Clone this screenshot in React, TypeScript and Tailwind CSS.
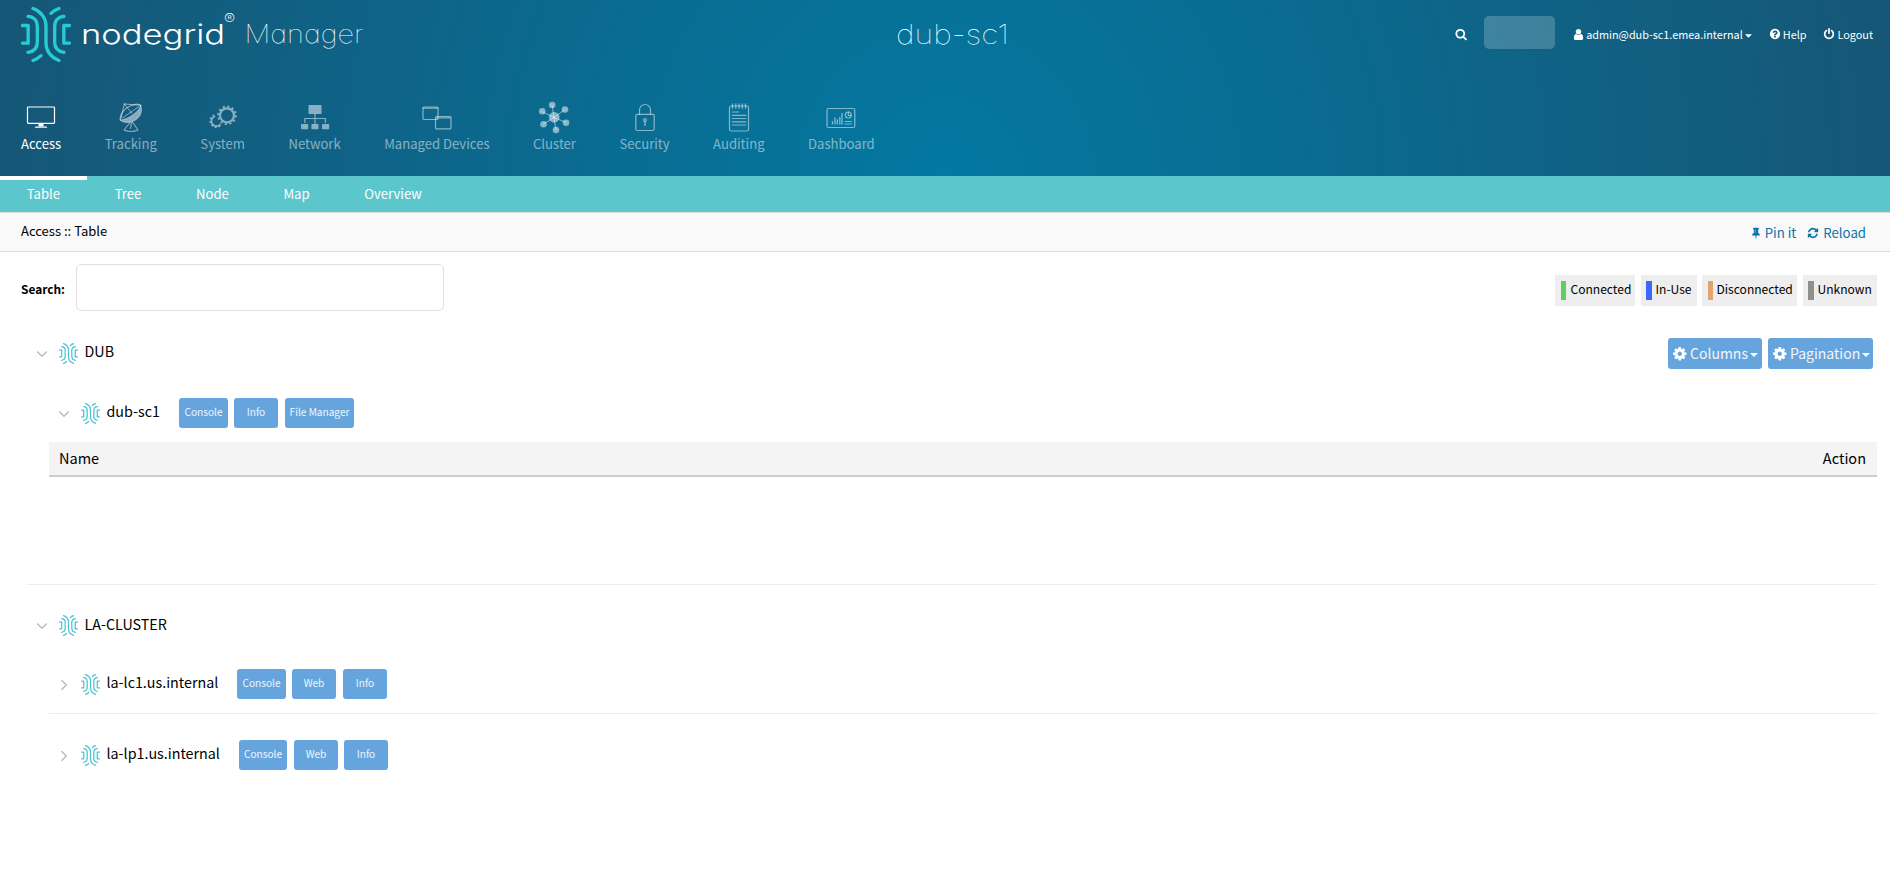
import type { ReactNode } from "react";

const FA = {
  search:
    "M1216 832q0-185-131.500-316.500t-316.500-131.500-316.500 131.500-131.500 316.500 131.500 316.500 316.500 131.500 316.500-131.500 131.500-316.500zm512 832q0 52-38 90t-90 38q-54 0-90-38l-343-342q-179 124-399 124-143 0-273.500-55.500t-225-150-150-225-55.500-273.500 55.500-273.500 150-225 225-150 273.500-55.500 273.500 55.500 225 150 150 225 55.500 273.500q0 220-124 399l343 343q37 37 37 90z",
  user: "M1536 1399q0 109-62.500 187t-150.500 78h-854q-88 0-150.500-78t-62.500-187q0-85 8.500-160.500t31.500-152 58.500-131 94-89 134.500-34.500q131 128 313 128t313-128q76 0 134.500 34.500t94 89 58.500 131 31.500 152 8.500 160.500zm-256-887q0 159-112.500 271.500t-271.500 112.500-271.500-112.500-112.500-271.500 112.500-271.500 271.500-112.500 271.500 112.500 112.500 271.500z",
  help: "M1024 1376v-192q0-14-9-23t-23-9h-192q-14 0-23 9t-9 23v192q0 14 9 23t23 9h192q14 0 23-9t9-23zm256-672q0-88-55.500-163t-138.500-116-170-41q-243 0-371 213-15 24 8 42l132 100q7 6 19 6 16 0 25-12 53-68 86-92 34-24 86-24 48 0 85.500 26t37.500 59q0 38-20 61t-68 45q-63 28-115.500 86.500t-52.500 125.500v36q0 14 9 23t23 9h192q14 0 23-9t9-23q0-19 21.500-49.500t54.500-49.500q32-18 49-28.500t46-35 44.500-48 28-60.500 12.500-81zm384 192q0 209-103 385.500t-279.500 279.500-385.500 103-385.500-103-279.500-279.500-103-385.500 103-385.500 279.500-279.500 385.500-103 385.500 103 279.500 279.500 103 385.500z",
  power:
    "M1664 896q0 156-61 298t-164 245-245 164-298 61-298-61-245-164-164-245-61-298q0-182 80.500-343t226.500-270q43-32 95.500-25t83.500 50q32 42 24.500 94.500t-49.500 84.500q-98 74-151.500 181t-53.500 228q0 104 40.500 198.500t109.500 163.500 163.500 109.500 198.500 40.500 198.500-40.500 163.500-109.500 109.500-163.500 40.500-198.500q0-121-53.500-228t-151.500-181q-42-32-49.500-84.500t24.500-94.500q31-43 84-50t95 25q146 109 226.500 270t80.500 343zm-640-768v640q0 52-38 90t-90 38-90-38-38-90v-640q0-52 38-90t90-38 90 38 38 90z",
  refresh:
    "M1639 1056q0 5-1 7-64 268-268 434.500t-478 166.500q-146 0-282.500-55t-243.500-157l-129 129q-19 19-45 19t-45-19-19-45v-448q0-26 19-45t45-19h448q26 0 45 19t19 45-19 45l-137 137q71 66 161 102t187 36q134 0 250-65t186-179q11-17 53-117 8-23 30-23h192q13 0 22.500 9.500t9.500 22.500zm25-800v448q0 26-19 45t-45 19h-448q-26 0-45-19t-19-45 19-45l138-138q-148-137-349-137-134 0-250 65t-186 179q-11 17-53 117-8 23-30 23h-199q-13 0-22.500-9.500t-9.500-22.500v-7q65-268 270-434.500t480-166.500q146 0 284 55.500t245 156.500l130-129q19-19 45-19t45 19 19 45z",
  pin: "M800 864v-448q0-14-9-23t-23-9-23 9-9 23v448q0 14 9 23t23 9 23-9 9-23zm672 352q0 26-19 45t-45 19h-429l-51 483q-2 12-10.500 20.500t-20.500 8.500h-1q-27 0-32-27l-76-485h-404q-26 0-45-19t-19-45q0-123 78.500-221.500t177.500-98.500v-512q-52 0-90-38t-38-90 38-90 90-38h640q52 0 90 38t38 90-38 90-90 38v512q99 0 177.500 98.500t78.500 221.500z",
  cog: "M1152 896q0-106-75-181t-181-75-181 75-75 181 75 181 181 75 181-75 75-181zm512-109v222q0 12-8 23t-20 13l-185 28q-19 54-39 91 35 50 107 138 10 12 10 25t-9 23q-27 37-99 108t-94 71q-12 0-26-9l-138-108q-44 23-91 38-16 136-29 186-7 28-36 28h-222q-14 0-24.500-8.500t-11.500-21.500l-28-184q-49-16-90-37l-141 107q-10 9-25 9-14 0-25-11-126-114-165-168-7-10-7-23 0-12 8-23 15-21 51-66.500t54-70.500q-27-50-41-99l-183-27q-13-2-21-12.500t-8-23.500v-222q0-12 8-23t19-13l186-28q14-46 39-92-40-57-107-138-10-12-10-24 0-10 9-23 26-36 98.500-107.500t94.500-71.500q13 0 26 10l138 107q44-23 91-38 16-136 29-186 7-28 36-28h222q14 0 24.500 8.500t11.500 21.500l28 184q49 16 90 37l142-107q9-9 24-9 13 0 25 10 129 119 165 170 7 8 7 22 0 12-8 23-15 21-51 66.500t-54 70.500q26 50 41 98l183 28q13 2 21 12.500t8 23.500z",
};

function Glyph({ d, className }: { d: string; className: string }) {
  return (
    <svg viewBox="0 0 1792 1792" fill="currentColor" className={`shrink-0 ${className}`}>
      <path d={d} />
    </svg>
  );
}

function Caret({ className }: { className: string }) {
  return (
    <svg viewBox="0 0 8 4" className={`h-1 shrink-0 ${className}`} fill="currentColor">
      <path d="M0 0h8L4 4z" />
    </svg>
  );
}

function Mark({ className, color }: { className: string; color: string }) {
  return (
    <svg viewBox="33 21 150 165" className={`shrink-0 ${className}`} fill="none" stroke={color} strokeWidth="10" strokeLinecap="round" strokeLinejoin="round">
      <path d="M37.500 76.500H54.500V129.500H37.500" />
      <path d="M54 49C72 50 82 62 82 80V126C82 144 72 155 54 157" />
      <path d="M69 25.500C92 33 108 54 108 78V130C108 152 122 173 147 181.500" />
      <path d="M69 181.500Q83 177 93 167" />
      <path d="M147 25.500Q133 30 123 40" />
      <path d="M162 49C144 50 134 62 134 80V126C134 144 144 155 162 157" />
      <path d="M178.500 76.500H161.500V129.500H178.500" />
    </svg>
  );
}

function Icon({ children }: { children: ReactNode }) {
  return (
    <svg viewBox="0 0 34 34" className="h-[34px] w-[34px]" fill="none" stroke="currentColor" strokeWidth="1.200" strokeLinejoin="round" strokeLinecap="round">
      {children}
    </svg>
  );
}

const monitor = (
  <Icon>
    <rect x="3.500" y="7" width="27" height="16.300" rx="0.800" />
    <path d="M14.500 23.300h5v3.200h-5z" fill="currentColor" stroke="none" />
    <path d="M11.500 27.200h11" />
  </Icon>
);

const dish = (
  <Icon>
    <path d="M6.300 20C5.500 15 10 8.500 16 6C20.500 4 25 3.500 26.800 5.500" />
    <path d="M6.300 20C12 20 24 13.500 26.800 5.500C29 12.500 25.500 18 20.500 20.500C15 23.500 8.500 23 6.300 20z" fill="currentColor" strokeWidth="0.800" />
    <path d="M10.300 4L7 18M10.300 4L26.500 5.300M10.300 4L18 13.500M8.500 18L25 6.500" strokeWidth="1" />
    <path d="M16 22.500L10 30M18.500 22l5.500 8M10 30q7 3 14 0M17.500 22.500l-1 6" strokeWidth="1.100" />
  </Icon>
);

const gears = (
  <Icon>
    <circle cx="21" cy="15.300" r="7" strokeWidth="2.200" />
    <circle cx="21" cy="15.300" r="8.900" strokeWidth="1.800" strokeDasharray="2.200 2.460" strokeLinecap="butt" />
    <path d="M8.500 16.500a5 5 0 1 0 5.600 8" strokeWidth="1.700" />
    <path d="M8.200 15a6.300 6.300 0 1 0 7.400 9.500" strokeWidth="1.600" strokeDasharray="1.900 2" strokeLinecap="butt" />
  </Icon>
);

const network = (
  <Icon>
    <g fill="currentColor" stroke="none">
      <rect x="10.500" y="5" width="13" height="9" rx="0.600" />
      <rect x="3" y="24" width="7.200" height="5.300" rx="0.800" />
      <rect x="13.400" y="24" width="7.200" height="5.300" rx="0.800" />
      <rect x="24" y="24" width="7.200" height="5.300" rx="0.800" />
    </g>
    <path d="M17 14v9.500M6.800 22.500v-4h20.600v4" />
  </Icon>
);

const devices = (
  <Icon>
    <rect x="3" y="7" width="15" height="12.500" rx="1" />
    <path d="M3 8.200h15" />
    <path d="M18 16.500h12a1 1 0 0 1 1 1v10.300a1 1 0 0 1-1 1H16.500a1 1 0 0 1-1-1v-10.300a1 1 0 0 1 1-1H18M15.500 17.800H31" />
  </Icon>
);

const cluster = (
  <Icon>
    <path d="M17 17.500L15 5M17 17.500l11-8M17 17.500l12 5M17 17.500L19 30M17 17.500L6.500 24M17 17.500L5 11.500" strokeWidth="1" />
    <g fill="currentColor" stroke="none">
      <circle cx="17.200" cy="17.300" r="5.400" />
      <circle cx="15.200" cy="5" r="3.300" />
      <circle cx="28" cy="9.500" r="3.300" />
      <circle cx="29" cy="22.800" r="3.300" />
      <circle cx="19" cy="30" r="3.300" />
      <circle cx="6.500" cy="24.200" r="3.300" />
      <circle cx="5.200" cy="11.300" r="3.300" />
    </g>
  </Icon>
);

const lock = (
  <Icon>
    <rect x="7.800" y="14.300" width="18.400" height="16.200" rx="1.500" />
    <path d="M11.500 14v-4a5.500 5.500 0 0 1 11 0v4" />
    <circle cx="17" cy="20" r="1.400" />
    <path d="M17 21.500v4" strokeWidth="1.400" />
  </Icon>
);

const notepad = (
  <Icon>
    <rect x="7.500" y="6" width="19" height="25" rx="1.800" />
    <path d="M10.500 3.800v4.500M13.800 3.800v4.500M17 3.800v4.500M20.300 3.800v4.500M23.500 3.800v4.500" />
    <path d="M10.300 12h6.500M10.300 15.300h13.500M10.300 18.500h13.500M10.300 21.800h13.500M10.300 25h13.500" />
  </Icon>
);

const dashboard = (
  <Icon>
    <rect x="3" y="8.500" width="27.800" height="19" rx="1.500" />
    <path d="M8.500 24.500v-3.500M11 24.500v-7M13.300 24.500v-5M15.800 24.500v-7.500M18 24.500V13" strokeWidth="1.300" strokeLinecap="butt" />
    <circle cx="24.300" cy="15" r="3" />
    <path d="M24.300 12v3.500h2.500M21 21.500h6.500M21 24h6.500" />
  </Icon>
);

const mainNav: { label: string; icon: ReactNode; active?: boolean }[] = [
  { label: "Access", icon: monitor, active: true },
  { label: "Tracking", icon: dish },
  { label: "System", icon: gears },
  { label: "Network", icon: network },
  { label: "Managed Devices", icon: devices },
  { label: "Cluster", icon: cluster },
  { label: "Security", icon: lock },
  { label: "Auditing", icon: notepad },
  { label: "Dashboard", icon: dashboard },
];

const subNav = ["Table", "Tree", "Node", "Map", "Overview"];

const legend = [
  { label: "Connected", swatch: "bg-[#5fcf5f] w-[5px] mr-[4.500px]", box: "w-20 pl-1.5" },
  { label: "In-Use", swatch: "bg-[#3d66ff] w-1.5 mr-[3.500px]", box: "ml-1.5 w-14 pl-[5px]" },
  { label: "Disconnected", swatch: "bg-[#e2a46f] w-[5px] mr-[3.500px]", box: "ml-[5px] w-[95px] pl-1.5" },
  { label: "Unknown", swatch: "bg-[#8f8f8f] w-1.5 mr-[3.500px]", box: "ml-1.5 w-[74px] pl-[5px]" },
];

function Chevron({ open }: { open?: boolean }) {
  return (
    <svg viewBox="0 0 12 12" className="size-3 shrink-0" fill="none" stroke="#bcbcbc" strokeWidth="1.500">
      <path d={open ? "M1.200 3.500L6 8.300l4.800-4.800" : "M3.500 1.200L8.300 6l-4.800 4.800"} />
    </svg>
  );
}

type Action = { label: string; className: string };

function NodeRow({ name, open, level, actions = [], nameClass }: { name: string; open?: boolean; level: 0 | 1; actions?: Action[]; nameClass: string }) {
  return (
    <div className={`flex h-[30px] items-center ${level === 0 ? "pl-9" : "pl-[58px]"}`}>
      <span className="mt-px flex">
        <Chevron open={open} />
      </span>
      <Mark className="ml-[11px] h-[21px] w-[19px]" color="#4cc5d3" />
      <span className={`ml-[6.500px] text-[14.3px] leading-5 whitespace-nowrap ${nameClass}`}>{name}</span>
      {actions.map((a) => (
        <button key={a.label} className={`flex h-[30px] shrink-0 items-center justify-center rounded-[3px] bg-[#66a4de] pb-0.5 text-[10.1px] leading-5 text-white/90 ${a.className}`}>
          {a.label}
        </button>
      ))}
    </div>
  );
}

function Menu({ label, className }: { label: string; className: string }) {
  return (
    <button className={`flex h-[31px] items-center rounded-[3px] bg-[#66a4de] pl-[3.500px] text-white ${className}`}>
      <Glyph d={FA.cog} className="size-[15.500px]" />
      <span className="mb-0.5 ml-[3px] text-[14px] leading-5 whitespace-nowrap text-white/90">{label}</span>
      <Caret className="mt-[3px] ml-[2px] w-2" />
    </button>
  );
}

export default function App() {
  return (
    <div className="flex min-h-[870px] w-full flex-col bg-white font-['Noto_Sans_CJK_SC',sans-serif] text-black">
      <header className="flex h-44 flex-col bg-[radial-gradient(circle_at_50%_100%,#0378a1,#165676)] text-white">
        <div className="grid h-[90px] grid-cols-3 items-start">
          <div className="flex pt-[7px] pl-[21px]">
            <Mark className="h-[55px] w-[50px]" color="#27cbd6" />
            <svg viewBox="0 0 290 50" className="ml-[9px] h-[50px] w-[290px] font-[Inter]" fill="white">
              <text x="1" y="36.700" fontSize="27.500" fontWeight="300" textLength="144" lengthAdjust="spacingAndGlyphs">nodegrid</text>
              <text x="144" y="17.600" fontSize="16.500" fontWeight="200">®</text>
              <text x="164.500" y="36" fontSize="25.600" fontWeight="100" textLength="119" lengthAdjust="spacingAndGlyphs" className="[font-feature-settings:'cv11']">Manager</text>
            </svg>
          </div>
          <svg viewBox="0 0 120 50" className="mt-[7px] ml-[260px] h-[50px] w-[120px] font-[Inter]" fill="white">
            <text x="6" y="36.700" fontSize="27.500" fontWeight="100" textLength="113" lengthAdjust="spacingAndGlyphs">dub-sc1</text>
          </svg>
          <div className="flex items-center justify-end pt-4 pr-[17px] text-[10.85px] leading-5">
            <Glyph d={FA.search} className="mt-1 mr-[17px] size-[12.300px]" />
            <span className="h-[33px] w-[71px] rounded-[5px] bg-white/20" />
            <Glyph d={FA.user} className="mt-[3px] ml-[16.500px] size-[13px]" />
            <span className="mt-0.5 ml-[1.500px]">admin@dub-sc1.emea.internal</span>
            <Caret className="mt-1.5 ml-[2.500px] w-[7px]" />
            <Glyph d={FA.help} className="mt-[3px] ml-[17px] size-3" />
            <span className="mt-0.5 ml-[1.500px]">Help</span>
            <Glyph d={FA.power} className="mt-[3px] ml-[17px] size-3" />
            <span className="mt-0.5 ml-[2px]">Logout</span>
          </div>
        </div>
        <nav className="flex gap-[43.500px] pt-2.5 pl-[21px]">
          {mainNav.map((n) => (
            <div key={n.label} className={`flex flex-col items-center ${n.active ? "text-white" : "text-white/50"}`}>
              {n.icon}
              <span className="text-[13.1px] leading-5 whitespace-nowrap">{n.label}</span>
            </div>
          ))}
        </nav>
      </header>

      <nav className="flex h-9 bg-[#5bc6cc] text-[13.1px] leading-5 text-white">
        {subNav.map((s, i) => (
          <div key={s} className={`flex items-center border-t-4 pr-[27.300px] ${i === 0 ? "border-white pl-[26.800px]" : "border-transparent pl-[27.400px]"}`}>
            <span className="-mt-1">{s}</span>
          </div>
        ))}
      </nav>

      <div className="flex h-10 items-center justify-between border-y border-[#dcdcdc] bg-[#f9f9f9] pr-6 pl-[21px] leading-5">
        <span className="mb-0.5 text-[13.05px]">Access :: Table</span>
        <div className="mt-0.5 flex items-center text-[13.2px] text-[#0a74ab]">
          <Glyph d={FA.pin} className="size-3" />
          <span className="ml-[2.500px]">Pin it</span>
          <Glyph d={FA.refresh} className="ml-[10.500px] size-3" />
          <span className="ml-[4.500px]">Reload</span>
        </div>
      </div>

      <div className="flex justify-between pt-3 pr-[13px] pl-[21px]">
        <div className="flex items-center">
          <span className="mt-0.5 w-[55px] text-[11.9px] leading-5 font-bold">Search:</span>
          <input className="h-[47px] w-[368px] rounded-[5px] border border-[#e0e0e0] bg-white" />
        </div>
        <div className="flex pt-[11px]">
          {legend.map((l) => (
            <div key={l.label} className={`flex h-[31px] items-center bg-[#eee] ${l.box}`}>
              <span className={`h-[19px] ${l.swatch}`} />
              <span className="mb-[3px] text-[12.05px] leading-5 whitespace-nowrap">{l.label}</span>
            </div>
          ))}
        </div>
      </div>

      <main className="flex flex-col pr-[13px]">
        <div className="mt-[27px] flex h-[31px] items-center justify-between pr-1">
          <NodeRow name="DUB" open level={0} nameClass="mb-[5px]" />
          <div className="flex gap-1.5">
            <Menu label="Columns" className="w-[94px]" />
            <Menu label="Pagination" className="w-[105px]" />
          </div>
        </div>
        <div className="mt-[29px]">
          <NodeRow
            name="dub-sc1"
            open
            level={1}
            nameClass="mb-1 w-[72.500px]"
            actions={[
              { label: "Console", className: "w-[49px]" },
              { label: "Info", className: "ml-1.5 w-11" },
              { label: "File Manager", className: "ml-[7px] w-[69px]" },
            ]}
          />
        </div>
        <div className="mt-3.5 ml-[49px] flex h-[35px] items-center justify-between border-b-2 border-[#cdcdcd] bg-[#f4f4f4] pr-[11px] pl-2.5 pb-0.5 text-[14.5px] leading-5">
          <span>Name</span>
          <span>Action</span>
        </div>
        <hr className="mt-[107px] ml-[27px] border-[#ebebeb]" />
        <div className="mt-[25px]">
          <NodeRow name="LA-CLUSTER" open level={0} nameClass="mb-0.5" />
        </div>
        <div className="mt-[29px]">
          <NodeRow
            name="la-lc1.us.internal"
            level={1}
            nameClass="mb-1 w-[130.500px]"
            actions={[
              { label: "Console", className: "w-[49px]" },
              { label: "Web", className: "ml-1.5 w-11" },
              { label: "Info", className: "ml-[7px] w-11" },
            ]}
          />
        </div>
        <hr className="mt-3.5 ml-[49px] border-[#ebebeb]" />
        <div className="mt-[26px]">
          <NodeRow
            name="la-lp1.us.internal"
            level={1}
            nameClass="mb-1 w-[132.500px]"
            actions={[
              { label: "Console", className: "w-12" },
              { label: "Web", className: "ml-[7px] w-11" },
              { label: "Info", className: "ml-1.5 w-11" },
            ]}
          />
        </div>
      </main>
    </div>
  );
}
